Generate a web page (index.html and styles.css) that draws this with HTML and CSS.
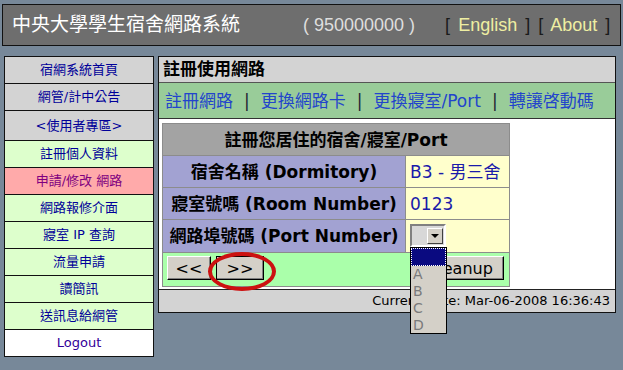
FILE: index.html
```html
<!DOCTYPE html>
<html lang="zh-Hant">
  <head>
    <meta charset="UTF-8" />
    <title>中央大學學生宿舍網路系統</title>
    <link rel="stylesheet" href="styles.css">
  </head>
  <body>
    <div class="topbar">
      <span class="site-title">中央大學學生宿舍網路系統</span>
      <span class="user-id">( 950000000 )</span>
      <span class="top-links">[ <a href="#">English</a> ] [ <a href="#">About</a> ]</span>
    </div>

    <div class="layout">
      <ul class="side-menu">
        <li class="menu-grey"><a href="#">宿網系統首頁</a></li>
        <li class="menu-grey"><a href="#">網管/計中公告</a></li>
        <li class="menu-grey menu-head"><a href="#">&lt;使用者專區&gt;</a></li>
        <li class="menu-green"><a href="#">註冊個人資料</a></li>
        <li class="menu-red"><a href="#">申請/修改 網路</a></li>
        <li class="menu-green"><a href="#">網路報修介面</a></li>
        <li class="menu-green"><a href="#">寢室 IP 查詢</a></li>
        <li class="menu-green"><a href="#">流量申請</a></li>
        <li class="menu-green"><a href="#">讀簡訊</a></li>
        <li class="menu-green"><a href="#">送訊息給網管</a></li>
        <li class="menu-white"><a href="#" class="logout">Logout</a></li>
      </ul>

      <div class="panel">
        <div class="panel-title">註冊使用網路</div>
        <div class="panel-nav">
          <a href="#">註冊網路</a>
          <span class="sep">|</span>
          <a href="#">更換網路卡</a>
          <span class="sep">|</span>
          <a href="#">更換寢室/Port</a>
          <span class="sep">|</span>
          <a href="#">轉讓啓動碼</a>
        </div>

        <div class="panel-body">
          <div class="reg-form">
            <div class="form-head">註冊您居住的宿舍/寢室/Port</div>

            <div class="form-label">宿舍名稱 (Dormitory)</div>
            <div class="form-value">B3 - 男三舍</div>

            <div class="form-label">寢室號嗎 (Room Number)</div>
            <div class="form-value">0123</div>

            <div class="form-label">網路埠號碼 (Port Number)</div>
            <div class="form-value form-select-cell">
              <div class="port-select">
                <span class="port-arrow"><span class="arrow-down"></span></span>
                <ul class="port-list">
                  <li class="port-current"></li>
                  <li>A</li>
                  <li>B</li>
                  <li>C</li>
                  <li>D</li>
                </ul>
              </div>
            </div>

            <div class="form-buttons">
              <button class="btn btn-prev">&lt;&lt;</button>
              <button class="btn btn-next">&gt;&gt;</button>
              <button class="btn btn-clean">Cleanup</button>
              <span class="mark-circle"></span>
            </div>
          </div>
        </div>

        <div class="status-bar">Current Date: Mar-06-2008 16:36:43</div>
      </div>
    </div>
  </body>
</html>
```

FILE: styles.css
```css
body {
  margin: 0;
  background: #778899;
  font-family: "DejaVu Sans", "Noto Sans CJK TC", sans-serif;
}

a {
  text-decoration: none;
}

/* encabezado */
.topbar {
  display: flex;
  align-items: center;
  height: 40px;
  margin: 4px 2px 0 2px;
  padding-left: 9px;
  border: 1px solid #111;
  background: #6e6e6e;
  font-family: "Liberation Sans", "Noto Sans CJK TC", sans-serif;
  font-size: 18px;
  line-height: 22px;
}

.site-title {
  color: #fff;
  font-size: 19px;
}

.user-id {
  margin-left: 63px;
  color: #dedede;
}

.top-links {
  margin-left: 30px;
  color: #1a1a1a;
  word-spacing: 3px;
}

.top-links a {
  color: #eeeea2;
}

.layout {
  display: flex;
  align-items: flex-start;
  gap: 4px;
  margin-top: 10px;
  padding-left: 4px;
}

/* menu lateral */
.side-menu {
  width: 148px;
  margin: 0;
  padding: 0;
  list-style: none;
  border: 1px solid #111;
}

.side-menu li {
  display: flex;
  align-items: center;
  justify-content: center;
  height: 26px;
  border-top: 1px solid #111;
  font-size: 13px;
  line-height: 16px;
}

.side-menu li:first-child {
  border-top: 0;
}

.side-menu li.menu-head {
  height: 29px;
}

.side-menu a {
  color: #000099;
}

.menu-grey {
  background: #d3d3d3;
}

.menu-green {
  background: #ddffcc;
}

.menu-red {
  background: #ffaaaa;
}

.side-menu .menu-red a {
  color: #800080;
}

.menu-white {
  background: #fff;
}

.side-menu a.logout {
  color: #330099;
}

/* panel principal */
.panel {
  width: 456px;
  border: 1px solid #111;
  background: #fff;
}

.panel-title {
  height: 25px;
  padding-left: 4px;
  border-bottom: 1px solid #555;
  background: #d3d3d3;
  color: #000;
  font-size: 17px;
  font-weight: bold;
  line-height: 25px;
}

.panel-nav {
  display: flex;
  align-items: center;
  gap: 11px;
  height: 35px;
  padding-left: 6px;
  border-bottom: 1px solid #333;
  background: #99cc99;
  font-size: 17px;
  line-height: 20px;
}

.panel-nav a {
  color: #2244cc;
}

.panel-nav .sep {
  color: #223;
}

.panel-body {
  height: 164px;
  padding: 4px 0 2px 3px;
}

.reg-form {
  display: grid;
  grid-template-columns: 242px 103px;
  grid-template-rows: 31px 31px 31px 32px 33px;
  gap: 1px;
  width: 346px;
  padding: 1px;
  background: #8c8c8c;
  font-size: 17px;
  line-height: 20px;
}

.form-head {
  grid-column: 1 / 3;
  display: flex;
  align-items: center;
  justify-content: center;
  background: #a3a3a3;
  font-weight: bold;
}

.form-label {
  display: flex;
  align-items: center;
  justify-content: center;
  background: #a2a2d2;
  font-weight: bold;
  white-space: nowrap;
}

.form-value {
  display: flex;
  align-items: center;
  padding-left: 4px;
  background: #ffffcc;
  color: #1a1aaa;
  white-space: nowrap;
}

.form-select-cell {
  align-items: flex-start;
  padding-top: 4px;
}

/* select desplegado */
.port-select {
  position: relative;
  display: flex;
  align-items: center;
  justify-content: flex-end;
  box-sizing: border-box;
  width: 36px;
  height: 23px;
  padding-right: 1px;
  border: 2px solid;
  border-color: #808080 #fff #fff #808080;
  background: #d8d8d8;
}

.port-arrow {
  display: flex;
  align-items: center;
  justify-content: center;
  box-sizing: border-box;
  width: 16px;
  height: 16px;
  border: 1px solid;
  border-color: #fff #404040 #404040 #fff;
  background: #d4d0c8;
}

.arrow-down {
  width: 0;
  height: 0;
  border-left: 4px solid transparent;
  border-right: 4px solid transparent;
  border-top: 4px solid #000;
}

.port-list {
  position: absolute;
  top: 21px;
  left: -2px;
  z-index: 10;
  box-sizing: border-box;
  width: 37px;
  height: 87px;
  margin: 0;
  padding: 0;
  list-style: none;
  border: 1px solid #000;
  background: #d4d0c8;
}

.port-list li {
  height: 17px;
  padding-left: 2px;
  color: #7a7a7a;
  font-size: 14px;
  line-height: 17px;
}

.port-list li.port-current {
  box-sizing: border-box;
  height: 18px;
  border: 1px dotted #fff;
  background: #0a0a80;
}

/* botones */
.form-buttons {
  grid-column: 1 / 3;
  position: relative;
  display: flex;
  align-items: flex-start;
  gap: 5px;
  padding: 3px 5px 0 4px;
  background: #aaffaa;
}

.btn {
  box-sizing: border-box;
  height: 24px;
  padding: 0;
  border: 1px solid;
  border-color: #fff #000 #000 #fff;
  box-shadow: inset -1px -1px #808080;
  background: #d4d0c8;
  color: #000;
  font-family: "DejaVu Sans", sans-serif;
  font-size: 16px;
}

.btn-prev {
  width: 44px;
}

.btn-next {
  width: 48px;
  border-color: #000;
}

.btn-clean {
  width: 88px;
  margin-left: auto;
}

.mark-circle {
  position: absolute;
  top: -1px;
  left: 45px;
  z-index: 5;
  box-sizing: border-box;
  width: 68px;
  height: 39px;
  border: 4px solid #cc1111;
  border-radius: 50%;
}

.status-bar {
  height: 22px;
  padding-right: 5px;
  border-top: 1px solid #222;
  background: #d3d3d3;
  color: #000;
  font-size: 13px;
  line-height: 22px;
  text-align: right;
}
```
